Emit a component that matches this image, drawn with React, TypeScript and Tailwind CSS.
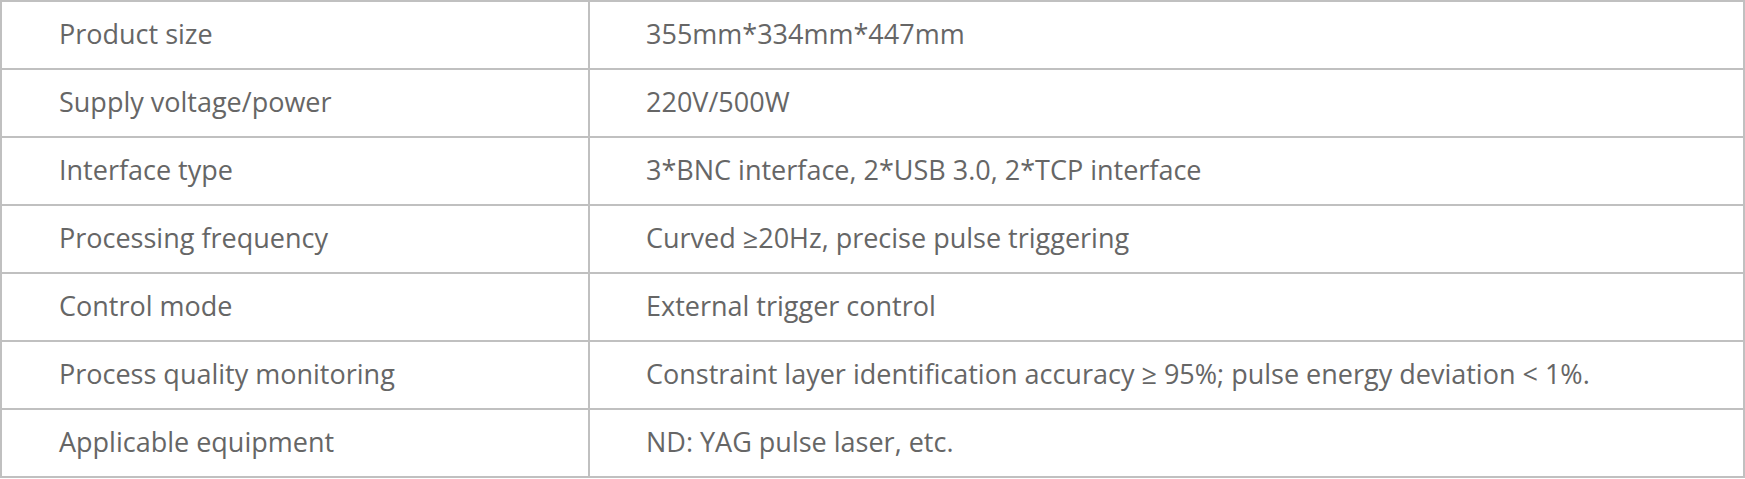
const specs = [
  { name: "Product size", value: "355mm*334mm*447mm" },
  { name: "Supply voltage/power", value: "220V/500W" },
  { name: "Interface type", value: "3*BNC interface, 2*USB 3.0, 2*TCP interface" },
  { name: "Processing frequency", value: "Curved ≥20Hz, precise pulse triggering" },
  { name: "Control mode", value: "External trigger control" },
  {
    name: "Process quality monitoring",
    value: "Constraint layer identification accuracy ≥ 95%; pulse energy deviation < 1%.",
  },
  { name: "Applicable equipment", value: "ND: YAG pulse laser, etc." },
];

export default function App() {
  return (
    <div className="w-[1745px] h-[479px] bg-white font-['Open_Sans',sans-serif] text-[#666]">
      <table className="w-full border-collapse">
        <tbody>
          {specs.map((s, i) => (
            <tr key={i} className="h-[68px]">
              <td className="w-[588px] border-2 border-[#c0c0c0] pl-[57px] pb-[3px] text-[27px] leading-none">
                {s.name}
              </td>
              <td className="border-2 border-[#c0c0c0] pl-[56px] pb-[3px] text-[27px] leading-none">
                {s.value}
              </td>
            </tr>
          ))}
        </tbody>
      </table>
    </div>
  );
}
